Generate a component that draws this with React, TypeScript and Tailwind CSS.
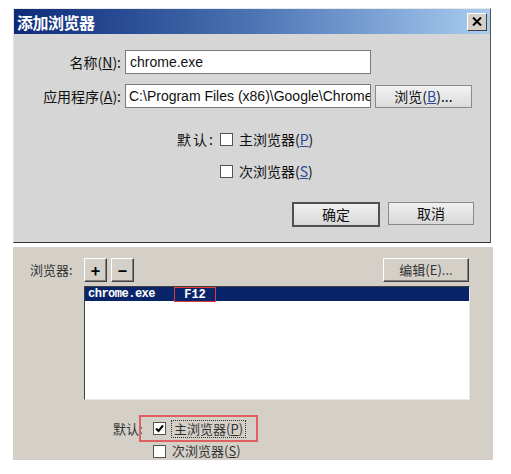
import React from 'react';

const cjk = { fontFamily: '"Noto Sans CJK SC", "Liberation Sans", sans-serif' };
const sans = { fontFamily: 'Tahoma, "Liberation Sans", "Noto Sans CJK SC", sans-serif' };
const song = { fontFamily: '"Liberation Mono", "Noto Sans CJK SC", monospace' };

const Check = ({ checked }: { checked?: boolean }) => (
  <span className="w-[13px] h-[13px] border border-[#555] bg-white flex items-center justify-center shrink-0">
    {checked && (
      <svg width="9" height="9" viewBox="0 0 9 9">
        <path d="M1 4.5 L3.5 7 L8 1.5" stroke="#000" strokeWidth="2" fill="none" />
      </svg>
    )}
  </span>
);

const XPButton = ({ children, className = '' }: { children: React.ReactNode; className?: string }) => (
  <div
    className={`flex items-center justify-center border border-t-white border-l-white border-r-[#404040] border-b-[#404040] bg-[#d4d0c8] shadow-[inset_-1px_-1px_0_#808080] ${className}`}
  >
    {children}
  </div>
);

export default function App() {
  return (
    <div className="w-[511px] h-[474px] bg-white overflow-hidden text-[#111]" style={cjk}>
      {/* 添加浏览器 dialog */}
      <div className="ml-[13px] mt-[8px] w-[478px] h-[235px] bg-[#d6d6d6] border border-t-[#e8e8e8] border-l-[#e0e0e0] border-r-[#555] border-b-[#333] flex flex-col">
        <div className="h-[25px] flex items-center justify-between pl-[3px] pr-[3px] bg-gradient-to-r from-[#0e2a78] via-[#4c74b4] to-[#a9cdf0]">
          <span className="text-white font-bold text-[16px] leading-none tracking-[-0.5px]">添加浏览器</span>
          <span className="w-[20px] h-[18px] flex items-center justify-center bg-[#d4d0c8] border border-t-white border-l-white border-r-[#404040] border-b-[#404040]">
            <svg width="10" height="9" viewBox="0 0 10 9">
              <path d="M1 0.5 L9 8.5 M9 0.5 L1 8.5" stroke="#000" strokeWidth="2" />
            </svg>
          </span>
        </div>

        <div className="grid grid-cols-[108px_246px_98px] gap-x-[3px] gap-y-[10px] mt-[16px] items-center text-[14px]">
          <div className="text-right pr-[1px] whitespace-nowrap">
            名称(<span className="underline">N</span>):
          </div>
          <div className="h-[24px] bg-white border border-[#7a7a7a] px-[4px] flex items-center overflow-hidden whitespace-nowrap" style={sans}>
            chrome.exe
          </div>
          <div />
          <div className="text-right pr-[1px] whitespace-nowrap">
            应用程序(<span className="underline">A</span>):
          </div>
          <div className="h-[24px] bg-white border border-[#7a7a7a] px-[3px] flex items-center overflow-hidden whitespace-nowrap" style={sans}>
            C:\Program Files (x86)\Google\Chrome\Application\chrome.exe
          </div>
          <div className="h-[23px] ml-[1px] border border-[#8a8a8a] bg-gradient-to-b from-[#f2f2f2] to-[#dcdcdc] flex items-center justify-center whitespace-nowrap">
            浏览(<span className="underline text-[#2a4a9a]">B</span>)...
          </div>
        </div>

        <div className="flex flex-col gap-[19px] mt-[25px] ml-[158px] text-[14px]">
          <div className="flex items-center h-[13px]">
            <span className="w-[48px] text-right pr-[5px] tracking-[2px]">默认:</span>
            <Check />
            <span className="ml-[6px]">主浏览器(<span className="underline text-[#2a4a9a]">P</span>)</span>
          </div>
          <div className="flex items-center h-[13px] ml-[48px]">
            <Check />
            <span className="ml-[6px]">次浏览器(<span className="underline text-[#2a4a9a]">S</span>)</span>
          </div>
        </div>

        <div className="flex justify-end gap-[8px] mt-[24px] mr-[16px] text-[14px]">
          <div className="w-[88px] h-[25px] border-2 border-[#505050] bg-gradient-to-b from-[#f0f0f0] to-[#d8d8d8] flex items-center justify-center">
            确定
          </div>
          <div className="w-[86px] h-[23px] border border-[#8a8a8a] bg-gradient-to-b from-[#f0f0f0] to-[#d8d8d8] flex items-center justify-center">
            取消
          </div>
        </div>
      </div>

      {/* 浏览器 preferences panel */}
      <div className="ml-[13px] mt-[4px] w-[480px] h-[213px] bg-[#d4d0c8] overflow-hidden text-[13px] text-[#333]">
        <div className="flex items-center mt-[11px] pl-[17px]">
          <span className="w-[54px] whitespace-nowrap">浏览器:</span>
          <XPButton className="w-[23px] h-[24px] font-bold text-[16px] text-black">+</XPButton>
          <XPButton className="w-[23px] h-[24px] ml-[4px] font-bold text-[16px] text-black">−</XPButton>
          <XPButton className="w-[86px] h-[24px] ml-auto mr-[24px] text-[13px] whitespace-nowrap">编辑(E)...</XPButton>
        </div>

        <div className="ml-[71px] mt-[4px] w-[386px] h-[114px] bg-white border border-t-[#404040] border-l-[#404040] border-r-[#e8e8e8] border-b-[#e8e8e8]">
          <div className="h-[14px] bg-[#0a246a] text-white text-[12px] font-bold flex items-center leading-none" style={song}>
            <span className="ml-[3px] w-[86px] tracking-[-0.5px]">chrome.exe</span>
            <span className="w-[42px] h-[15px] border border-[#e03a3a] flex items-center justify-center mt-[1px]">F12</span>
          </div>
        </div>

        <div className="ml-[100px] mt-[15px] flex flex-col gap-[1px]">
          <div className="flex items-center h-[27px]">
            <span className="w-[26px] whitespace-nowrap">默认:</span>
            <div className="h-[27px] flex items-center border-2 border-[#e06060] pl-[12px] pr-[10px]">
              <Check checked />
              <span className="ml-[5px] px-[2px] border border-dotted border-[#333] leading-[16px] whitespace-nowrap">主浏览器(<span className="underline">P</span>)</span>
            </div>
          </div>
          <div className="flex items-center h-[16px] ml-[40px]">
            <Check />
            <span className="ml-[6px] whitespace-nowrap">次浏览器(<span className="underline">S</span>)</span>
          </div>
        </div>
      </div>
    </div>
  );
}
